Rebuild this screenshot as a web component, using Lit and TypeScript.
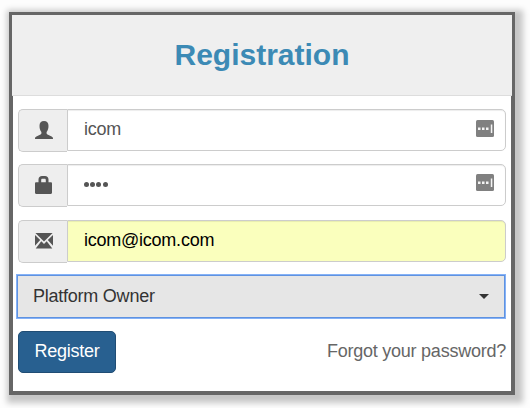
import { LitElement, html, css, svg } from "lit";
import { customElement } from "lit/decorators.js";

const icons = {
  user: svg`<path d="M9 0C6.100 0 4.500 1.700 4.500 4.700c0 2.700.6 4.700 1.900 6.200v1.300c0 .6-.3 1-.9 1.300l-4.100 1.900C.5 15.900 0 16.500 0 17.400V18h18v-.6c0-.9-.5-1.500-1.400-2l-4.100-1.900c-.6-.3-.9-.7-.9-1.300v-1.300c1.300-1.500 1.900-3.500 1.900-6.200C13.500 1.700 11.900 0 9 0z"/>`,
  lock: svg`<path fill-rule="evenodd" d="M3.500 6.300V3.600C3.500 1.300 4.900 0 7 0h3c2.100 0 3.500 1.300 3.500 3.600v2.700h2.300c.7 0 1.200.5 1.200 1.200v9.300c0 .7-.5 1.200-1.200 1.200H1.200C.5 18 0 17.500 0 16.800V7.500c0-.7.500-1.200 1.200-1.200zM6.200 6.300h4.600V4.200c0-.9-.4-1.400-1.200-1.400H7.400c-.8 0-1.200.5-1.200 1.400z"/>`,
  mail: svg`<path d="M.4 1h17.200L9 9.600zM0 2.900 5.200 8.100 0 13.800zM18 2.900v10.900L12.800 8.100zM6.300 9.200 9 11.900l2.700-2.700 5.600 7.300H.7z"/>`,
};

@customElement("app-root")
export class AppRoot extends LitElement {
  static styles = css`
    :host { display: block; height: 408px; overflow: hidden; background: #fdfdfd; font: 18px/24px "Liberation Sans", Arial, sans-serif; letter-spacing: -.24px; color: #555; }
    * { box-sizing: border-box; }
    .card { width: 506px; height: 383px; background: #fff; border: 4px solid #666; border-top-width: 3px; box-shadow: 3px 3px 6px 5px #c6c6c6; }
    .page { padding: 12px 0 0 9px; }
    header { height: 81px; margin: 0 -1px; background: #efefef; border-bottom: 1px solid #ddd; display: flex; align-items: center; justify-content: center; }
    h1 { margin: 0; font-size: 30px; letter-spacing: 0; line-height: 40px; color: #3c8ab5; }
    form { padding: 13px 5px 0; }
    .row { display: flex; align-items: flex-start; height: 43px; margin-bottom: 12px; }
    .row.second { margin-bottom: 13px; }
    .addon { width: 49px; height: 43px; border: 1px solid #ccc; border-right: 0; border-radius: 5px 0 0 5px; background: #eee; display: flex; align-items: center; justify-content: center; padding: 0 0 2px 1px; }
    .addon svg { fill: #555; width: 18px; height: 18px; }
    .field { flex: 1; height: 42px; border: 1px solid #ccc; border-radius: 0 5px 5px 0; padding: 0 11px 3px 16px; display: flex; align-items: center; justify-content: space-between; box-shadow: inset 0 1px 1px rgba(0,0,0,.075); }
    .second .field { padding-bottom: 4px; }
    .filled { background: #faffbd; color: #000; }
    .dots { display: flex; gap: 1.200px; padding-top: 3px; }
    .dots i { width: 5px; height: 5px; border-radius: 50%; background: #555; }
    .select { margin: 0 1px 0 -1px; height: 43px; background: #e6e6e6; border: 1px solid #5f92e0; outline: 1px solid #85b2f7; color: #333; display: flex; align-items: center; justify-content: space-between; padding: 0 15px 2px; }
    .caret { border: 5px solid transparent; border-top-color: #333; border-bottom: 0; margin-top: 2px; }
    .actions { display: flex; justify-content: space-between; align-items: center; margin-top: 13px; }
    button { height: 42px; width: 98px; padding: 0 0 2px; border: 1px solid #204d74; border-radius: 5px; background: #286090; color: #fff; font: inherit; letter-spacing: inherit; }
    .forgot { color: #666; padding-bottom: 2px; }
  `;

  icon(name: keyof typeof icons) {
    return html`<span class="addon"><svg viewBox="0 0 18 18">${icons[name]}</svg></span>`;
  }

  key() {
    return html`<svg width="18" height="18" viewBox="0 0 18 18"><rect width="18" height="17" rx="1.500" fill="#808080"/><path fill="#f4f4f4" d="M2 7.500h2.500v2.500H2zM6 7.500h2.500v2.500H6zM10 7.500h2.500v2.500H10zM14.800 4.500h1.500v8.500h-1.500z"/></svg>`;
  }

  render() {
    return html`<div class="page"><section class="card">
      <header><h1>Registration</h1></header>
      <form>
        <div class="row">${this.icon("user")}<span class="field">icom ${this.key()}</span></div>
        <div class="row second">${this.icon("lock")}<span class="field"><span class="dots"><i></i><i></i><i></i><i></i></span>${this.key()}</span></div>
        <div class="row">${this.icon("mail")}<span class="field filled">icom@icom.com</span></div>
        <div class="select">Platform Owner<span class="caret"></span></div>
        <div class="actions"><button type="button">Register</button><span class="forgot">Forgot your password?</span></div>
      </form>
    </section></div>`;
  }
}
